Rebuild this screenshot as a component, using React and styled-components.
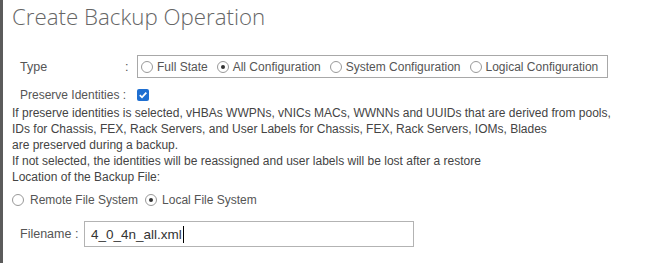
import React from 'react'
import styled, { createGlobalStyle } from 'styled-components'

const GlobalStyle = createGlobalStyle`
  html, body {
    margin: 0;
    padding: 0;
    background: #fff;
  }
  body {
    font-family: "Liberation Sans", Arial, sans-serif;
    color: #444;
  }
`

const Page = styled.div`
  width: 668px;
  height: 263px;
  box-sizing: border-box;
  border-left: 3px solid #5b5b5b;
  padding: 0 0 0 9px;
  overflow: hidden;
`

const Title = styled.h1`
  margin: 0;
  padding-top: 1px;
  height: 54px;
  font-family: "Open Sans", sans-serif;
  font-weight: 300;
  font-size: 22.3px;
  color: #666;
`

const Row = styled.div`
  display: flex;
  align-items: center;
  gap: ${p => p.$gap || 0}px;
  padding-left: ${p => p.$indent || 0}px;
  margin-top: ${p => p.$top || 0}px;
  height: ${p => p.$height}px;
`

const Label = styled.span`
  width: ${p => p.$width}px;
  flex-shrink: 0;
  font-size: ${p => p.$size || 12.5}px;
  color: #555;
  white-space: nowrap;
`

const RadioBox = styled.div`
  display: flex;
  align-items: center;
  gap: 9px;
  height: 23px;
  box-sizing: border-box;
  padding: 0 9px 0 3px;
  border: 1px solid #a8a8a8;
`

const RadioItem = styled.label`
  display: flex;
  align-items: center;
  gap: ${p => p.$gap}px;
  font-size: 12px;
  color: #555;
  white-space: nowrap;
`

const Circle = styled.span`
  width: 12px;
  height: 12px;
  box-sizing: border-box;
  border-radius: 50%;
  border: 1px solid #999;
  display: flex;
  align-items: center;
  justify-content: center;
  &::after {
    content: '';
    width: 4px;
    height: 4px;
    border-radius: 50%;
    background: ${p => (p.$checked ? '#333' : 'transparent')};
  }
`

const Check = styled.span`
  width: 12px;
  height: 12px;
  border-radius: 2px;
  background: #1f6fd1;
  display: flex;
  align-items: center;
  justify-content: center;
`

const Help = styled.p`
  margin: 0;
  font-size: 12px;
  line-height: 16px;
  color: #444;
`

const FileInput = styled.div`
  width: 330px;
  height: 26px;
  box-sizing: border-box;
  border: 1px solid #b3b3b3;
  display: flex;
  align-items: center;
  padding-left: 6px;
  font-size: 13.5px;
  color: #333;
`

const Caret = styled.span`
  width: 1px;
  height: 17px;
  background: #000;
  margin-left: 1px;
`

const Radio = ({ checked, gap = 4, children }) => (
  <RadioItem $gap={gap}>
    <Circle $checked={checked} />
    {children}
  </RadioItem>
)

export default function App() {
  return (
    <Page>
      <GlobalStyle />
      <Title>Create Backup Operation</Title>
      <Row $indent={8} $height={23}>
        <Label $width={105}>Type</Label>
        <Label $width={12}>:</Label>
        <RadioBox>
          <Radio>Full State</Radio>
          <Radio checked>All Configuration</Radio>
          <Radio>System Configuration</Radio>
          <Radio>Logical Configuration</Radio>
        </RadioBox>
      </Row>
      <Row $indent={8} $height={20} $top={7}>
        <Label $width={117} $size={12}>Preserve Identities :</Label>
        <Check>
          <svg width="10" height="10" viewBox="0 0 10 10">
            <path d="M1.8 5.2 L4 7.3 L8.3 2.6" fill="none" stroke="#fff" strokeWidth="1.8" />
          </svg>
        </Check>
      </Row>
      <Help>
        If preserve identities is selected, vHBAs WWPNs, vNICs MACs, WWNNs and UUIDs that are derived from pools,
        <br />
        IDs for Chassis, FEX, Rack Servers, and User Labels for Chassis, FEX, Rack Servers, IOMs, Blades
        <br />
        are preserved during a backup.
        <br />
        If not selected, the identities will be reassigned and user labels will be lost after a restore
        <br />
        Location of the Backup File:
      </Help>
      <Row $height={24} $top={3} $gap={7}>
        <Radio gap={6}>Remote File System</Radio>
        <Radio checked gap={5}>Local File System</Radio>
      </Row>
      <Row $indent={8} $height={26} $top={9}>
        <Label $width={64}>Filename :</Label>
        <FileInput>
          4_0_4n_all.xml
          <Caret />
        </FileInput>
      </Row>
    </Page>
  )
}
